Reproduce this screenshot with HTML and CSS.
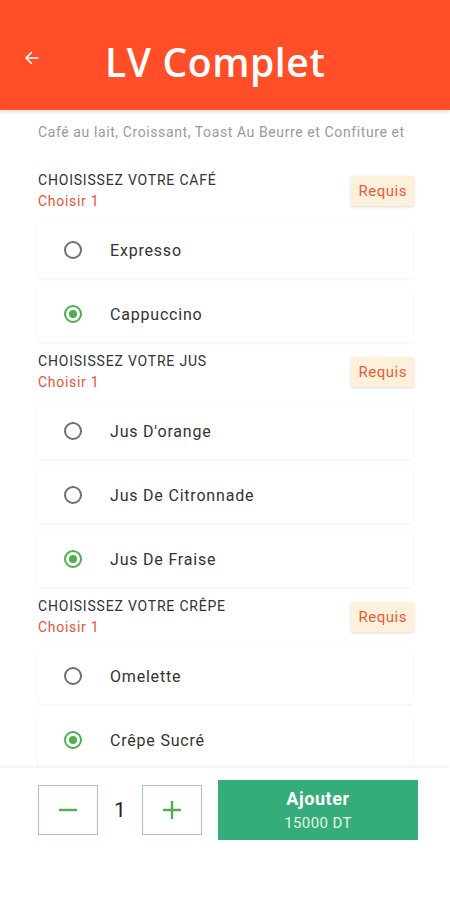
FILE: index.html
```html
<!DOCTYPE html>
<html lang="fr">
<head>
    <meta charset="UTF-8">
    <meta name="viewport" content="width=device-width, initial-scale=1.0">
    <title>LV Complet</title>
    <link rel="stylesheet" href="styles.css">
</head>
<body>
    <div id="app">
        <header class="top-bar">
            <span class="back">
                <svg width="18" height="18" viewBox="0 0 24 24"><path d="M20 12H5M11 5l-7 7 7 7" fill="none" stroke="#fff" stroke-width="2.2" stroke-linecap="round" stroke-linejoin="round"/></svg>
            </span>
            <h1>LV Complet</h1>
        </header>

        <main class="content">
            <p class="desc">Café au lait, Croissant, Toast Au Beurre et Confiture et</p>

            <!-- café -->
            <section class="group">
                <div class="group-head">
                    <div>
                        <div class="group-title">CHOISISSEZ VOTRE CAFÉ</div>
                        <div class="group-sub">Choisir 1</div>
                    </div>
                    <span class="badge">Requis</span>
                </div>
                <div class="option"><span class="radio"></span>Expresso</div>
                <div class="option"><span class="radio on"></span>Cappuccino</div>
            </section>

            <!-- jus -->
            <section class="group">
                <div class="group-head">
                    <div>
                        <div class="group-title">CHOISISSEZ VOTRE JUS</div>
                        <div class="group-sub">Choisir 1</div>
                    </div>
                    <span class="badge">Requis</span>
                </div>
                <div class="option"><span class="radio"></span>Jus D'orange</div>
                <div class="option"><span class="radio"></span>Jus De Citronnade</div>
                <div class="option"><span class="radio on"></span>Jus De Fraise</div>
            </section>

            <!-- crêpe -->
            <section class="group">
                <div class="group-head">
                    <div>
                        <div class="group-title">CHOISISSEZ VOTRE CRÊPE</div>
                        <div class="group-sub">Choisir 1</div>
                    </div>
                    <span class="badge">Requis</span>
                </div>
                <div class="option"><span class="radio"></span>Omelette</div>
                <div class="option"><span class="radio on"></span>Crêpe Sucré</div>
                <div class="option"><span class="radio"></span>Crêpe Salé</div>
            </section>
        </main>

        <footer class="cart-bar">
            <button class="qty-btn" aria-label="moins">
                <svg width="20" height="20" viewBox="0 0 20 20"><path d="M1 10h18" stroke="#4caf50" stroke-width="2.4"/></svg>
            </button>
            <span class="qty">1</span>
            <button class="qty-btn" aria-label="plus">
                <svg width="20" height="20" viewBox="0 0 20 20"><path d="M1 10h18M10 1v18" stroke="#4caf50" stroke-width="2.4"/></svg>
            </button>
            <button class="add-btn">
                <span class="add-label">Ajouter</span>
                <span class="add-price">15000 DT</span>
            </button>
        </footer>
    </div>
</body>
</html>
```

FILE: styles.css
```css
body {
    margin: 0;
    padding: 0;
    background-color: #fff;
    font-family: Roboto, "Liberation Sans", sans-serif;
}
#app {
    width: 450px;
    height: 900px;
    display: flex;
    flex-direction: column;
    overflow: hidden;
}
.top-bar {
    height: 110px;
    box-sizing: border-box;
    flex-shrink: 0;
    background-color: #ff4e28;
    display: flex;
    align-items: center;
    padding: 12px 0 0 23px;
    box-shadow: 0 2px 4px rgba(0, 0, 0, 0.12);
    position: relative;
    z-index: 1;
}
.back {
    display: flex;
    width: 18px;
    height: 18px;
    margin-top: -6px;
}
.top-bar h1 {
    margin: 0 0 0 64px;
    color: #fff;
    font-family: "Open Sans", sans-serif;
    font-weight: 600;
    font-size: 39px;
    letter-spacing: 0.6px;
}
.content {
    flex: 1;
    min-height: 0;
    overflow: hidden;
    padding: 0 37px 0 38px;
}
.desc {
    margin: 12px 0 0;
    font-size: 14px;
    letter-spacing: 0.6px;
    line-height: 20px;
    color: #9a9a9a;
    white-space: nowrap;
}
.group {
    margin-top: 5px;
}
.group:first-of-type {
    margin-top: 27px;
}
.group-head {
    display: flex;
    justify-content: space-between;
    align-items: center;
    margin-bottom: 10px;
}
.group-title {
    font-size: 14px;
    letter-spacing: 0.8px;
    line-height: 22px;
    color: #333;
}
.group-sub {
    font-size: 14px;
    letter-spacing: 0.7px;
    line-height: 21px;
    color: #e4553d;
}
.badge {
    background-color: #fdf1dc;
    color: #e85c3c;
    font-size: 15px;
    letter-spacing: 0.5px;
    padding: 6px 7px 6px 8px;
    line-height: 18px;
    box-shadow: 0 1px 3px rgba(0, 0, 0, 0.15);
    border-radius: 2px;
    margin-right: -1px;
}
.option {
    height: 56px;
    margin-bottom: 8px;
    display: flex;
    align-items: center;
    padding-left: 26px;
    font-size: 16px;
    letter-spacing: 0.8px;
    color: #333;
    background-color: #fff;
    box-shadow: 0 1px 3px rgba(0, 0, 0, 0.06);
    border-radius: 3px;
}
.radio {
    width: 14px;
    height: 14px;
    border: 2px solid #707070;
    border-radius: 50%;
    margin-right: 28px;
    box-sizing: content-box;
    position: relative;
}
.radio.on {
    border-color: #4caf50;
}
.radio.on::after {
    content: "";
    position: absolute;
    left: 3px;
    top: 3px;
    width: 8px;
    height: 8px;
    border-radius: 50%;
    background-color: #4caf50;
}
.cart-bar {
    flex-shrink: 0;
    height: 132px;
    box-sizing: border-box;
    display: flex;
    align-items: flex-start;
    padding: 12px 32px 0 38px;
    background-color: #fff;
    box-shadow: 0 -2px 4px rgba(0, 0, 0, 0.06);
    position: relative;
}
.qty-btn {
    width: 60px;
    height: 50px;
    margin-top: 5px;
    border: 1px solid #a9c9a9;
    background-color: #fff;
    display: flex;
    align-items: center;
    justify-content: center;
    padding: 0;
}
.qty {
    width: 44px;
    text-align: center;
    font-size: 21px;
    line-height: 24px;
    margin-top: 18px;
    color: #222;
}
.add-btn {
    margin-left: 16px;
    flex: 1;
    height: 60px;
    border: none;
    background-color: #35ad7a;
    color: #fff;
    display: flex;
    flex-direction: column;
    align-items: center;
    justify-content: center;
    font-family: Roboto, sans-serif;
    padding: 0;
}
.add-label {
    font-size: 18px;
    letter-spacing: 0.6px;
    font-weight: bold;
    line-height: 22px;
}
.add-price {
    font-size: 15px;
    letter-spacing: 0.4px;
    line-height: 20px;
    color: #e3f4ea;
    margin-top: 3px;
}
```
